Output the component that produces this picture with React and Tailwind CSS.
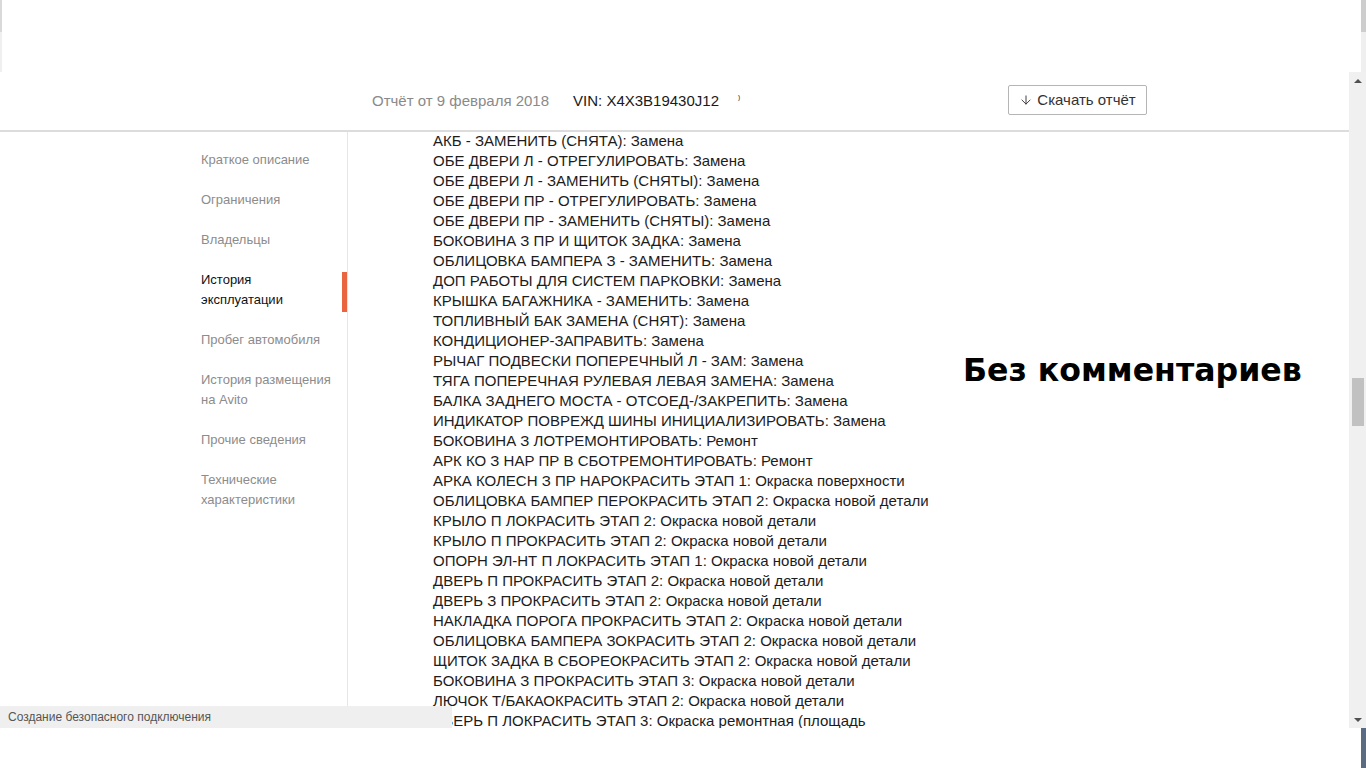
import { ArrowDown } from 'lucide-react';

const navItems = [
  { id: 1, label: ['Краткое описание'] },
  { id: 2, label: ['Ограничения'] },
  { id: 3, label: ['Владельцы'] },
  { id: 4, label: ['История', 'эксплуатации'], active: true },
  { id: 5, label: ['Пробег автомобиля'] },
  { id: 6, label: ['История размещения', 'на Avito'] },
  { id: 7, label: ['Прочие сведения'] },
  { id: 8, label: ['Технические', 'характеристики'] },
];

const works = [
  ['АКБ - ЗАМЕНИТЬ (СНЯТА)', 'Замена'],
  ['ОБЕ ДВЕРИ Л - ОТРЕГУЛИРОВАТЬ', 'Замена'],
  ['ОБЕ ДВЕРИ Л - ЗАМЕНИТЬ (СНЯТЫ)', 'Замена'],
  ['ОБЕ ДВЕРИ ПР - ОТРЕГУЛИРОВАТЬ', 'Замена'],
  ['ОБЕ ДВЕРИ ПР - ЗАМЕНИТЬ (СНЯТЫ)', 'Замена'],
  ['БОКОВИНА З ПР И ЩИТОК ЗАДКА', 'Замена'],
  ['ОБЛИЦОВКА БАМПЕРА З - ЗАМЕНИТЬ', 'Замена'],
  ['ДОП РАБОТЫ ДЛЯ СИСТЕМ ПАРКОВКИ', 'Замена'],
  ['КРЫШКА БАГАЖНИКА - ЗАМЕНИТЬ', 'Замена'],
  ['ТОПЛИВНЫЙ БАК ЗАМЕНА (СНЯТ)', 'Замена'],
  ['КОНДИЦИОНЕР-ЗАПРАВИТЬ', 'Замена'],
  ['РЫЧАГ ПОДВЕСКИ ПОПЕРЕЧНЫЙ Л - ЗАМ', 'Замена'],
  ['ТЯГА ПОПЕРЕЧНАЯ РУЛЕВАЯ ЛЕВАЯ ЗАМЕНА', 'Замена'],
  ['БАЛКА ЗАДНЕГО МОСТА - ОТСОЕД-/ЗАКРЕПИТЬ', 'Замена'],
  ['ИНДИКАТОР ПОВРЕЖД ШИНЫ ИНИЦИАЛИЗИРОВАТЬ', 'Замена'],
  ['БОКОВИНА З ЛОТРЕМОНТИРОВАТЬ', 'Ремонт'],
  ['АРК КО З НАР ПР В СБОТРЕМОНТИРОВАТЬ', 'Ремонт'],
  ['АРКА КОЛЕСН З ПР НАРОКРАСИТЬ ЭТАП 1', 'Окраска поверхности'],
  ['ОБЛИЦОВКА БАМПЕР ПЕРОКРАСИТЬ ЭТАП 2', 'Окраска новой детали'],
  ['КРЫЛО П ЛОКРАСИТЬ ЭТАП 2', 'Окраска новой детали'],
  ['КРЫЛО П ПРОКРАСИТЬ ЭТАП 2', 'Окраска новой детали'],
  ['ОПОРН ЭЛ-НТ П ЛОКРАСИТЬ ЭТАП 1', 'Окраска новой детали'],
  ['ДВЕРЬ П ПРОКРАСИТЬ ЭТАП 2', 'Окраска новой детали'],
  ['ДВЕРЬ З ПРОКРАСИТЬ ЭТАП 2', 'Окраска новой детали'],
  ['НАКЛАДКА ПОРОГА ПРОКРАСИТЬ ЭТАП 2', 'Окраска новой детали'],
  ['ОБЛИЦОВКА БАМПЕРА ЗОКРАСИТЬ ЭТАП 2', 'Окраска новой детали'],
  ['ЩИТОК ЗАДКА В СБОРЕОКРАСИТЬ ЭТАП 2', 'Окраска новой детали'],
  ['БОКОВИНА З ПРОКРАСИТЬ ЭТАП 3', 'Окраска новой детали'],
  ['ЛЮЧОК Т/БАКАОКРАСИТЬ ЭТАП 2', 'Окраска новой детали'],
  ['ДВЕРЬ П ЛОКРАСИТЬ ЭТАП 3', 'Окраска ремонтная (площадь'],
];

const Scrollbar = () => (
  <div className="w-[17px] h-full bg-[#f0f0f0] flex flex-col items-center">
    <div className="h-[17px] flex items-center justify-center">
      <div className="w-0 h-0 border-l-[4px] border-r-[4px] border-b-[4px] border-l-transparent border-r-transparent border-b-[#505050]"></div>
    </div>
    <div className="mt-[289px] w-[12px] h-[48px] bg-[#c1c1c1]"></div>
    <div className="flex-1"></div>
    <div className="h-[17px] flex items-center justify-center">
      <div className="w-0 h-0 border-l-[4px] border-r-[4px] border-t-[4px] border-l-transparent border-r-transparent border-t-[#505050]"></div>
    </div>
  </div>
);

export default function App() {
  return (
    <div
      className="w-[1366px] h-[768px] overflow-hidden bg-white flex flex-col"
      style={{ fontFamily: '"Liberation Sans", Arial, sans-serif' }}
    >
      {/* top strip */}
      <div className="h-[72px] flex shrink-0">
        <div className="w-[2px] flex flex-col">
          <div className="h-[32px] bg-[#d9d9d9]"></div>
          <div className="flex-1 bg-[#efefef]"></div>
        </div>
        <div className="flex-1"></div>
        <div className="w-[5px] flex flex-col">
          <div className="h-[32px] bg-[#cdcdcd]"></div>
          <div className="flex-1 bg-[#efefef]"></div>
        </div>
      </div>

      {/* page */}
      <div className="h-[656px] flex shrink-0 relative">
        <div className="flex-1 flex flex-col overflow-hidden">
          <header className="h-[60px] shrink-0 flex items-center border-b-2 border-[#dcdcdc] pl-[372px] pr-[202px]">
            <span className="text-[15px] text-[#8a8a8a]">Отчёт от 9 февраля 2018</span>
            <span className="ml-[24px] text-[15px] text-[#1a1a1a]">VIN: X4X3B19430J12</span>
            <span className="ml-[19px] text-[11px] text-[#444]">⁾</span>
            <button className="ml-auto mt-[-2px] h-[30px] w-[139px] border border-[#b5b5b5] rounded-[2px] flex items-center justify-center gap-[4px] text-[15px] text-[#333] bg-white">
              <ArrowDown size={14} strokeWidth={1.6} />
              Скачать отчёт
            </button>
          </header>

          <div className="flex flex-1 min-h-0">
            <nav className="w-[348px] shrink-0 border-r border-[#e6e6e6] pt-[18px] flex flex-col gap-[20px]">
              {navItems.map((item) => (
                <div key={item.id} className="flex justify-between">
                  <div
                    className={`pl-[201px] text-[13px] leading-[20px] ${
                      item.active ? 'text-[#111]' : 'text-[#8c8c8c]'
                    }`}
                  >
                    {item.label.map((l) => (
                      <div key={l}>{l}</div>
                    ))}
                  </div>
                  {item.active && (
                    <div className="w-[5px] mt-[2px] mb-[-2px] bg-[#e9643f]"></div>
                  )}
                </div>
              ))}
            </nav>

            <div className="w-[615px] shrink-0 pl-[85px] mt-[-1px] text-[15px] leading-[20px] text-[#1c1c1c]">
              {works.map(([name, kind], i) => (
                <div key={i} className="whitespace-nowrap">
                  {name}: {kind}
                </div>
              ))}
            </div>

            <div className="pt-[218px]">
              <h2
                className="text-[31.6px] leading-[40px] font-bold text-black whitespace-nowrap"
                style={{ fontFamily: '"DejaVu Sans", Arial, sans-serif' }}
              >
                Без комментариев
              </h2>
            </div>
          </div>
        </div>

        <Scrollbar />

        {/* browser status bubble */}
        <div className="absolute left-0 bottom-0 w-[452px] h-[22px] bg-[#efefef] flex items-center pl-[8px] text-[12px] text-[#555]">
          Создание безопасного подключения
        </div>
      </div>

      {/* bottom strip */}
      <div className="flex-1 flex">
        <div className="flex-1"></div>
        <div className="w-[5px] bg-[#5b6b82]"></div>
      </div>
    </div>
  );
}
